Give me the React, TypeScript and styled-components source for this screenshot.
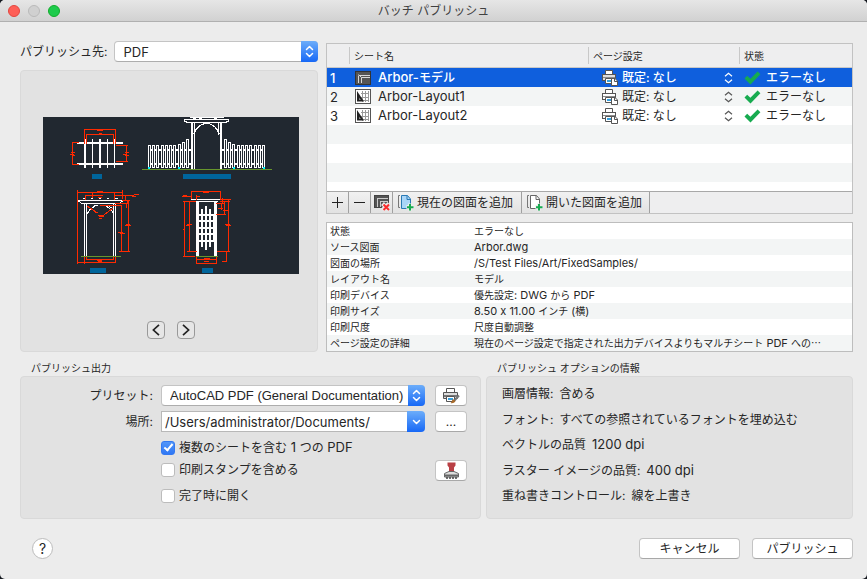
import React, { useState } from "react";
import styled, { createGlobalStyle, css } from "styled-components";

const GlobalStyle = createGlobalStyle`
  *, *::before, *::after { box-sizing: border-box; }
  body {
    margin: 0;
    background: #14181f;
    color: #262626;
    font: 12px/16px Inter, "Noto Sans CJK JP", sans-serif;
    font-feature-settings: "calt" 0;
  }
  button, input, select { font: inherit; color: inherit; margin: 0; }
`;

const Window = styled.main`
  display: flex;
  flex-direction: column;
  min-height: 100vh;
  overflow: hidden;
  border-radius: 5px;
  background: #ececec;
`;

const TitleBar = styled.header`
  display: grid;
  grid-template-columns: 1fr auto 1fr;
  align-items: center;
  height: 22px;
  padding: 0 8px;
  background: linear-gradient(#e6e6e6, #d1d1d1);
  border-bottom: 1px solid #b0b0b0;
`;

const Title = styled.h1`
  margin: 0;
  font-size: 12px;
  line-height: 16px;
  font-weight: 400;
  color: #404040;
`;

const Lights = styled.div`
  display: flex;
  gap: 8px;
`;

const Light = styled.button<{ $fill: string; $edge: string }>`
  width: 12px;
  height: 12px;
  padding: 0;
  border-radius: 50%;
  border: 1px solid ${(p) => p.$edge};
  background: ${(p) => p.$fill};
`;

const Content = styled.div`
  display: flex;
  flex: 1;
  flex-direction: column;
  padding: 19px 14px 20px 20px;
`;

const Upper = styled.div`
  display: grid;
  grid-template-columns: 298px minmax(0, 1fr);
  gap: 8px;
`;

const Column = styled.div<{ $top?: number }>`
  display: flex;
  flex-direction: column;
  gap: 8px;
  padding-top: ${(p) => p.$top ?? 0}px;
`;

const TargetRow = styled.div`
  display: flex;
  align-items: center;
  gap: 7px;
`;

const FieldLabel = styled.label`
  white-space: nowrap;
`;

const PopupWrap = styled.div`
  display: flex;
  position: relative;
  flex: 1;
  min-width: 0;
`;

const PopupSelect = styled.select<{ $narrow?: boolean }>`
  appearance: none;
  width: 100%;
  height: 21px;
  padding: 0 18px 0 8px;
  border: 1px solid #c4c4c4;
  border-bottom-color: #adadad;
  border-radius: 4px;
  background: #fff;
  font-family: ${(p) => (p.$narrow ? '"Liberation Sans"' : "Inter")}, "Noto Sans CJK JP", sans-serif;
  font-size: 13px;
`;

const BlueCap = styled.span`
  display: flex;
  position: absolute;
  top: 0;
  right: 0;
  align-items: center;
  justify-content: center;
  width: 17px;
  height: 21px;
  border-radius: 0 4px 4px 0;
  background: linear-gradient(#6cadfa, #1768f6);
  pointer-events: none;
`;

const panel = css`
  border: 1px solid #d9d9d9;
  border-radius: 4px;
  background: #e2e2e2;
`;

const PreviewPanel = styled.section`
  ${panel}
  display: flex;
  flex: 1;
  flex-direction: column;
  align-items: center;
  padding: 46px 18px 12px 22px;
`;

const Pager = styled.div`
  display: flex;
  gap: 12px;
  margin-top: auto;
`;

const PagerButton = styled.button`
  display: flex;
  align-items: center;
  justify-content: center;
  width: 18px;
  height: 18px;
  padding: 0;
  border: 1px solid #999;
  border-radius: 4px;
  background: #e6e6e6;
`;

const SheetBox = styled.div`
  display: flex;
  flex-direction: column;
  border: 1px solid #c2c2c2;
  background: #eeeeef;
`;

const SheetBody = styled.div`
  min-height: 147px;
  background: repeating-linear-gradient(#fff 0 19px, #f3f5f5 19px 38px) 0 24px;
`;

const SheetTable = styled.table`
  width: 100%;
  border-spacing: 0;
  table-layout: fixed;
`;

const HeadCell = styled.th<{ $width?: number }>`
  position: relative;
  width: ${(p) => (p.$width ? `${p.$width}px` : "auto")};
  height: 24px;
  padding: 0 5px;
  background: #eeeeef;
  font-size: 10px;
  font-weight: 400;
  text-align: left;
  border-bottom: 1px solid #c8c8c8;
  &:not(:first-child)::before {
    content: "";
    position: absolute;
    left: 0;
    top: 3px;
    bottom: 3px;
    width: 1px;
    background: #c8c8c8;
  }
`;

const SheetRow = styled.tr<{ $selected: boolean }>`
  height: 19px;
  font-weight: ${(p) => (p.$selected ? 500 : 400)};
  color: ${(p) => (p.$selected ? "#fff" : "#262626")};
  background: ${(p) => (p.$selected ? "#0f5fdd" : "transparent")};
`;

const Cell = styled.td`
  height: 19px;
  padding: 0 3px;
`;

const CellLine = styled.div<{ $gap: number; $indent?: number; $end?: number }>`
  display: flex;
  align-items: center;
  gap: ${(p) => p.$gap}px;
  height: 19px;
  padding-left: ${(p) => p.$indent ?? 0}px;
  padding-right: ${(p) => p.$end ?? 0}px;
  white-space: nowrap;
`;

const Mid = styled.span`
  font-size: 13px;
`;

const SetupSelect = styled.select`
  appearance: none;
  flex: 1;
  min-width: 0;
  height: 18px;
  padding: 0;
  border: 0;
  background: transparent;
`;

const SheetTools = styled.div`
  display: flex;
  height: 22px;
  border-top: 1px solid #a8a8a8;
`;

const ToolButton = styled.button<{ $width: number; $labelled?: boolean }>`
  display: flex;
  align-items: center;
  justify-content: ${(p) => (p.$labelled ? "flex-start" : "center")};
  gap: 3px;
  width: ${(p) => p.$width}px;
  padding: 0 0 0 ${(p) => (p.$labelled ? 4 : 0)}px;
  border: 0;
  border-right: 1px solid #a0a0a0;
  background: linear-gradient(#f1f1f1, #e2e2e2);
  white-space: nowrap;
`;

const DetailTable = styled.table`
  width: 100%;
  border: 1px solid #bdbdbd;
  border-spacing: 0;
  table-layout: fixed;
  font-size: 10px;
  line-height: 16px;
  background: #fff;
`;

const DetailRow = styled.tr`
  height: 16px;
  &:nth-child(even) { background: #f3f5f5; }
`;

const DetailName = styled.th`
  width: 144px;
  padding: 0 3px;
  font-weight: 400;
  text-align: left;
`;

const DetailValue = styled.td`
  padding: 0 3px;
  white-space: nowrap;
  overflow: hidden;
  font-family: "Noto Sans CJK JP", sans-serif;
`;

const Latin = styled.span<{ $size: number }>`
  font-family: Inter, sans-serif;
  font-size: ${(p) => p.$size}px;
  line-height: 1;
`;

const Lower = styled.div`
  display: grid;
  grid-template-columns: minmax(0, 461fr) minmax(0, 367fr);
  gap: 5px;
  margin-top: 9px;
`;

const Group = styled.section`
  display: flex;
  flex-direction: column;
`;

const GroupTitle = styled.h2`
  margin: 0;
  padding-left: 11px;
  font-size: 10px;
  line-height: 15px;
  font-weight: 400;
`;

const OutputPanel = styled.div`
  ${panel}
  display: grid;
  grid-template-columns: 132px 264px 34px;
  grid-template-rows: 25px 27px 26px 18px 34px;
  column-gap: 8px;
  align-items: center;
  min-height: 143px;
  padding: 6px 0 5px;
`;

const RightLabel = styled(FieldLabel)`
  text-align: right;
`;

const Combo = styled.div`
  display: flex;
  height: 21px;
`;

const ComboInput = styled.input`
  flex: 1;
  min-width: 0;
  height: 21px;
  padding: 0 3px;
  border: 1px solid #b8b8b8;
  border-right: 0;
  background: #fff;
  font-size: 13px;
`;

const ComboButton = styled.button`
  display: flex;
  align-items: center;
  justify-content: center;
  width: 18px;
  padding: 0;
  border: 0;
  border-radius: 0 4px 4px 0;
  background: linear-gradient(#6cadfa, #1768f6);
`;

const PushButton = styled.button<{ $width: number }>`
  display: flex;
  align-items: center;
  justify-content: center;
  justify-self: end;
  width: ${(p) => p.$width}px;
  height: 21px;
  padding: 0;
  border: 1px solid #c4c4c4;
  border-bottom-color: #a8a8a8;
  border-radius: 4px;
  background: #fff;
`;

const CheckLabel = styled.label`
  display: flex;
  grid-column: 2;
  align-items: center;
  gap: 4px;
  white-space: nowrap;
`;

const CheckBox = styled.input`
  appearance: none;
  width: 14px;
  height: 14px;
  border: 1px solid #bcbcbc;
  border-radius: 3px;
  background: #fff;
  &:checked {
    border-color: #3379f2;
    background: linear-gradient(#5296f8, #2f78f5);
  }
  &:checked::after {
    content: "";
    display: block;
    width: 5px;
    height: 9px;
    margin: 0 0 0 4px;
    border: solid #fff;
    border-width: 0 2px 2px 0;
    transform: rotate(40deg);
  }
`;

const InfoPanel = styled.ul`
  ${panel}
  display: flex;
  flex: 1;
  flex-direction: column;
  justify-content: space-between;
  margin: 0;
  padding: 9px 15px 14px;
  list-style: none;
`;

const InfoLine = styled.li`
  display: flex;
  gap: 6px;
  white-space: nowrap;
`;

const Footer = styled.footer`
  display: flex;
  align-items: center;
  gap: 12px;
  margin-top: auto;
  padding-left: 12px;
`;

const HelpButton = styled.button`
  width: 21px;
  height: 21px;
  margin-right: auto;
  padding: 0;
  border: 1px solid #bcbcbc;
  border-radius: 50%;
  background: #fff;
  font-size: 14px;
`;

/* Sets the Latin runs of a Japanese sentence one size up from the kana. */
const Mixed = ({ text, size }: { text: string; size: number }) => (
  <span>
    {text.split(/([ -~]+)/).map((part, i) =>
      i % 2 ? <Latin key={i} $size={size}>{part}</Latin> : part
    )}
  </span>
);

const UpDown = ({ color = "#fff" }: { color?: string }) => (
  <svg width="9" height="13" viewBox="0 0 9 13" fill="none" stroke={color} strokeWidth="1.5" strokeLinecap="round" strokeLinejoin="round">
    <path d="M1.5 4.5l3-3 3 3M1.5 8.5l3 3 3-3" />
  </svg>
);

const SmallUpDown = ({ color }: { color: string }) => (
  <svg width="9" height="12" viewBox="0 0 9 12" fill="none" stroke={color} strokeWidth="1.2">
    <path d="M1 4.2l3.5-3 3.5 3M1 7.8l3.5 3 3.5-3" />
  </svg>
);

const Down = () => (
  <svg width="9" height="6" viewBox="0 0 9 6" fill="none" stroke="#fff" strokeWidth="1.5" strokeLinecap="round" strokeLinejoin="round">
    <path d="M1.5 1.5l3 3 3-3" />
  </svg>
);

const Arrow = ({ flip }: { flip?: boolean }) => (
  <svg width="8" height="12" viewBox="0 0 8 12" fill="none" stroke="#222" strokeWidth="1.7">
    <path d={flip ? "M1 .8L6.6 6 1 11.2" : "M7 .8L1.4 6 7 11.2"} />
  </svg>
);

const ModelIcon = () => (
  <svg width="16" height="14" viewBox="0 0 16 14" fill="none">
    <rect x=".5" y=".5" width="15" height="13" fill="#555" stroke="#333" />
    <path d="M3.5 12V4.500M6.500 12V6.500H15M4.500 4.500H15" stroke="#d8d8d8" />
    <path d="M3.500 3.500l3 3" stroke="#d8d8d8" />
  </svg>
);

const LayoutIcon = () => (
  <svg width="16" height="15" viewBox="0 0 16 15" fill="none">
    <rect x=".5" y=".5" width="15" height="14" fill="#fff" stroke="#555" />
    <path d="M6 4.500h8M6 8.500h8M6 11.500h8M7.500 2v11M10.500 2v11M13.500 2v11" stroke="#999" />
    <path d="M2 2l7 10.500H2z" fill="#222" />
    <path d="M4 8.500l2 2.500H4z" fill="#888" />
  </svg>
);

const PagePrinterIcon = ({ selected }: { selected: boolean }) => (
  <svg width="16" height="16" viewBox="0 0 16 16">
    <path d="M3.500 5V.5H10.500V5" fill="#fff" stroke="#555" />
    <rect x=".5" y="4.500" width="13" height="6" fill={selected ? "#ddd" : "#fff"} stroke="#555" />
    <path d="M1 7h12v1H1z" fill="#8b8b8b" />
    <path d="M3.500 8.500h7v5h-7z" fill="#fff" stroke="#555" />
    <path d="M5 10h4v2H5z" fill="#35a0df" />
    <path d="M9.500 8.500h3.500l2.500 2.500v4.500h-6z" fill="#fff" stroke="#555" />
    <path d="M12.500 8.500v3h3" fill="none" stroke="#555" />
  </svg>
);

const CheckIcon = () => (
  <svg width="17" height="14" viewBox="0 0 17 14">
    <path d="M.5 7.500L3.200 4.800l3.200 3L13.600.6 16.400 3.200 6.500 13.500z" fill="#17ab50" />
  </svg>
);

const RemoveSheetIcon = () => (
  <svg width="16" height="16" viewBox="0 0 16 16" fill="none">
    <rect x=".5" y=".5" width="14" height="12" fill="#555" stroke="#444" />
    <path d="M3 3.500h11M6 6.500h8M3.500 3v9M6.500 6v6" stroke="#ccc" />
    <path d="M8.500 8.500l6.500 6.500M15 8.500L8.500 15" stroke="#eee" strokeWidth="4" />
    <path d="M9.500 9.500l5.500 5.500M15 9.500L9.500 15" stroke="#fb2c2c" strokeWidth="2" />
  </svg>
);

const AddSheetIcon = ({ fill }: { fill: string }) => (
  <svg width="17" height="17" viewBox="0 0 17 17" fill="none">
    <path d="M3 1.500H1.500v12H3" stroke="#777" />
    <path d="M4.500 1.500h6l3 3.500v9.500h-9z" fill={fill} stroke={fill === "#fff" ? "#666" : "#2879b5"} />
    <path d="M10 1.500v4h3.500" stroke={fill === "#fff" ? "#666" : "#2879b5"} />
    <path d="M13 9.500v7M9.500 13h7" stroke="#ededed" strokeWidth="4" />
    <path d="M13 10v6.500M10 13.300h6.500" stroke="#17ab50" strokeWidth="2" />
  </svg>
);

const Sign = ({ plus }: { plus?: boolean }) => (
  <svg width="13" height="13" viewBox="0 0 13 13" stroke="#222">
    <path d={plus ? "M1 6.500h11M6.500 1v11" : "M1 6.500h11"} />
  </svg>
);

const EditPrinterIcon = () => (
  <svg width="17" height="17" viewBox="0 0 17 17">
    <path d="M3.500 5V1.500h8V5" fill="#fff" stroke="#555" />
    <path d="M.5 5.500h14v6H.5z" fill="#ddd" stroke="#555" />
    <path d="M1 8h13v2H1z" fill="#777" />
    <path d="M3.500 9.500h8v5h-8z" fill="#fff" stroke="#555" />
    <path d="M5 11h5v2H5z" fill="#35a0df" />
    <path d="M16 8.500l-4.500 5" stroke="#777" strokeWidth="2" />
    <path d="M10 12l2.500 2c-1 2-3 2.500-5 2 1.500-1 1.200-2.500 2.500-4z" fill="#a86b2b" />
  </svg>
);

const StampIcon = () => (
  <svg width="17" height="17" viewBox="0 0 17 17">
    <path d="M4.500.5h8v3L11 5.500V10H6V5.500L4.500 3.500z" fill="#b94045" />
    <path d="M6 9.500h5l4.500 2v3.500H1.500v-3.500z" fill="#ddd" stroke="#666" />
    <path d="M1 12.500h15v2H1z" fill="#666" />
    <path d="M3 16h11" stroke="#444" strokeWidth="1.500" strokeDasharray="2 1" />
  </svg>
);

const pickets = [
  [105, 28], [109, 28], [113, 28], [118, 28], [122, 28], [126, 28], [130, 28], [135, 27], [139, 25], [143, 22],
];

const Fence = () => (
  <g>
    {pickets.map(([x, y]) => (
      <path key={x} d={`M${x + 0.5} 51V${y + 0.5}H${x + 2.5}V50.500H${x + 0.5}`} />
    ))}
    <path d="M108 33h2M112 33h1M116 33h2M121 33h1M125 33h1M129 33h1M133 33h2M138 33h1M142 33h1M146 33h2M108 47h2M112 47h1M116 47h2M121 47h1M125 47h1M129 47h1M133 47h2M138 47h1M142 47h1M146 47h2" strokeWidth="2" />
  </g>
);

const Drawing = () => (
  <svg width="256" height="157" viewBox="0 0 256 157" role="img" aria-label="Arbor" fill="none" shapeRendering="crispEdges">
    <rect width="256" height="157" fill="#212830" />
    <g stroke="#fff">
      <path d="M34 26h46M34 47h46M42 22v29M57 22v29" strokeWidth="2" />
      <path d="M49.500 22v29M64.500 22v29M71.500 22v29" />
      <Fence />
      <g transform="translate(327 0) scale(-1 1)"><Fence /></g>
      <path d="M149 5v47M178 5v47" strokeWidth="2" />
      <path d="M151.500 6v46M175.500 6v12M141 2.500h45M144 5.500h39M141.500 2v2l3 1.500M185.500 2v2l-3 1.500M150 1.500h3M156 1.500h3M171 1.500h3M147 .5h34" />
      <path d="M150.500 17.500c2-5 5-9 11-11h4c5 1 9 6 11 11M152 13.500c3-4 6-6 10-7M175 13.500c-3-4-5-6-9-7" />
      <path d="M35 83.500h45M38 86.500h38M35.500 84l3 2.500M79.500 84l-3 2.500M41.500 86v53M43.500 86v53M70.500 86v53M72.500 86v53" />
      <path d="M40 81.500h3M48 81.500h2M56 81.500h2M64 81.500h2M72 81.500h3" />
      <path d="M44.500 97c1-4 5-7 10-9M70.500 97c-1-4-5-7-10-9M47.500 92l5-4M69 91l-6-3" strokeDasharray="3 1" />
      <path d="M148 82.500h29M150 84.500h25" />
      <path d="M154.500 84v55M172.500 84v55" strokeWidth="3" />
      <path d="M159 92v38M163 89v44M167 92v38M154 98h18M154 104h18M154 111h18M154 117h18M154 124h18" strokeWidth="2" />
      <path d="M153.500 98v26M170.500 98v26" />
    </g>
    <g stroke="#ff2a00">
      <path d="M41.500 27V12.500h31V27M43.500 27V17.500h27V27M54 13.500h6M56 16.500h3M36 25.500h-7v22h7M73 28.500h12M73 44.500h12M83.500 28v17" />
      <path d="M27 37.500h4M28 35.500h4M29 38.500h3M80 37.500h4M82 35.500h4M82 38.500h4" />
      <path d="M34.500 73v74M79.500 73v9M34 75.500h46M54 74.500h6M42.500 83v-4.500h17M55 80.500h4M49.500 76v5M71.500 76v7M71 78.500h20M89 79.500h4M91 77.500h5M82.500 79v4" />
      <path d="M79 83.500h8M85.500 83v52M57 88.500h22M72 86.500h12v-4M83.500 86v5M78.500 88v47M76 134.500h11" />
      <path d="M82 108.500h6M83 107.500h4M75 115.500h5M77 116.500h5M44 89l6 4 3 2M55 99l6-1 9-7M52 95.500h3M56 99.500h5M56 101.500h3" />
      <path d="M43.500 140v2.500h27V140M34 145.500h38.500V140M41.500 140v7M54 143.500h5M55 144.500h4" />
      <path d="M148.500 82v-7.500h29V82M160 75.500h6M139 79.500h9M140 78.500h4M153.500 83v-5M153 79.500h4M177 82.500h11M179.500 81v5" />
      <path d="M140 84.500h13M141.500 84v56M140 139.500h12M146.500 85v50M144 134.500h10M144 107.500h5M143 108.500h4M140 112.500h2" />
      <path d="M177 84.500h10M185.500 82v53M174 134.500h13M173 97.500h10M181.500 85v13M173 86.500h9M178.500 87v6M175 91.500h5M180 93.500h5M182 107.500h5M183 108.500h5M183.500 135v9.500H179" />
      <path d="M153.500 140v6h20v-6M154 142.500h20M161 141.500h6M161 144.500h5" />
    </g>
    <path d="M99 52.500h130M38 139.500h40M153 139.500h22" stroke="#67962c" />
    <path d="M105 50h2v2h-2zM135 50h2v2h-2zM190 50h2v2h-2zM220 50h2v2h-2z" fill="#00f2ff" />
    <path d="M49 57h10v5H49zM140 57h48v5h-48zM47 151h16v5H47zM159 151h11v5h-11z" fill="#00659b" />
  </svg>
);

const sheets = [
  { name: "Arbor-モデル", model: true },
  { name: "Arbor-Layout1", model: false },
  { name: "Arbor-Layout2", model: false },
];

const details = [
  { name: "状態", value: "エラーなし" },
  { name: "ソース図面", value: "Arbor.dwg" },
  { name: "図面の場所", value: "/S/Test Files/Art/FixedSamples/" },
  { name: "レイアウト名", value: "モデル" },
  { name: "印刷デバイス", value: "優先設定: DWG から PDF" },
  { name: "印刷サイズ", value: "8.50 x 11.00 インチ (横)" },
  { name: "印刷尺度", value: "尺度自動調整" },
  { name: "ページ設定の詳細", value: "現在のページ設定で指定された出力デバイスよりもマルチシート PDF への…" },
];

const options = [
  ["画層情報:", "含める"],
  ["フォント:", "すべての参照されているフォントを埋め込む"],
  ["ベクトルの品質", "1200 dpi"],
  ["ラスター イメージの品質:", "400 dpi"],
  ["重ね書きコントロール:", "線を上書き"],
];

export default function App() {
  const [selected, setSelected] = useState(0);
  return (
    <>
      <GlobalStyle />
      <Window lang="ja">
        <TitleBar>
          <Lights>
            <Light aria-label="閉じる" $fill="#fe5f57" $edge="#e2463f" />
            <Light aria-label="しまう" $fill="#d0d0d0" $edge="#b9b9b9" />
            <Light aria-label="拡大" $fill="#1ecb4c" $edge="#12ac2b" />
          </Lights>
          <Title>バッチ パブリッシュ</Title>
        </TitleBar>
        <Content>
          <Upper>
            <Column>
              <TargetRow>
                <FieldLabel htmlFor="target">パブリッシュ先:</FieldLabel>
                <PopupWrap>
                  <PopupSelect id="target"><option>PDF</option></PopupSelect>
                  <BlueCap><UpDown /></BlueCap>
                </PopupWrap>
              </TargetRow>
              <PreviewPanel>
                <Drawing />
                <Pager>
                  <PagerButton aria-label="前へ"><Arrow /></PagerButton>
                  <PagerButton aria-label="次へ"><Arrow flip /></PagerButton>
                </Pager>
              </PreviewPanel>
            </Column>
            <Column $top={2}>
              <SheetBox>
                <SheetBody>
                  <SheetTable>
                    <thead>
                      <tr>
                        <HeadCell $width={22} aria-label="番号" />
                        <HeadCell>シート名</HeadCell>
                        <HeadCell $width={151}>ページ設定</HeadCell>
                        <HeadCell $width={113}>状態</HeadCell>
                      </tr>
                    </thead>
                    <tbody>
                      {sheets.map((s, i) => {
                        const on = i === selected;
                        return (
                          <SheetRow key={s.name} $selected={on} onClick={() => setSelected(i)}>
                            <Cell><CellLine $gap={0}><Mid>{i + 1}</Mid></CellLine></Cell>
                            <Cell>
                              <CellLine $gap={7} $indent={3}>
                                {s.model ? <ModelIcon /> : <LayoutIcon />}
                                <Mixed text={s.name} size={13} />
                              </CellLine>
                            </Cell>
                            <Cell>
                              <CellLine $gap={4} $indent={11} $end={3}>
                                <PagePrinterIcon selected={on} />
                                <SetupSelect aria-label={`${s.name} ページ設定`}><option>既定: なし</option></SetupSelect>
                                <SmallUpDown color={on ? "#fff" : "#555"} />
                              </CellLine>
                            </Cell>
                            <Cell>
                              <CellLine $gap={5} $indent={2}>
                                <CheckIcon />
                                <span>エラーなし</span>
                              </CellLine>
                            </Cell>
                          </SheetRow>
                        );
                      })}
                    </tbody>
                  </SheetTable>
                </SheetBody>
                <SheetTools>
                  <ToolButton $width={22} aria-label="追加"><Sign plus /></ToolButton>
                  <ToolButton $width={22} aria-label="削除"><Sign /></ToolButton>
                  <ToolButton $width={22} aria-label="モデルを除外"><RemoveSheetIcon /></ToolButton>
                  <ToolButton $width={129} $labelled><AddSheetIcon fill="#a9d5f7" />現在の図面を追加</ToolButton>
                  <ToolButton $width={128} $labelled><AddSheetIcon fill="#fff" />開いた図面を追加</ToolButton>
                </SheetTools>
              </SheetBox>
              <DetailTable>
                <tbody>
                  {details.map((d) => (
                    <DetailRow key={d.name}>
                      <DetailName scope="row">{d.name}</DetailName>
                      <DetailValue><Mixed text={d.value} size={11} /></DetailValue>
                    </DetailRow>
                  ))}
                </tbody>
              </DetailTable>
            </Column>
          </Upper>
          <Lower>
            <Group>
              <GroupTitle>パブリッシュ出力</GroupTitle>
              <OutputPanel>
                <RightLabel htmlFor="preset">プリセット:</RightLabel>
                <PopupWrap>
                  <PopupSelect id="preset" $narrow><option>AutoCAD PDF (General Documentation)</option></PopupSelect>
                  <BlueCap><UpDown /></BlueCap>
                </PopupWrap>
                <PushButton $width={32} aria-label="プリセットを編集"><EditPrinterIcon /></PushButton>
                <RightLabel htmlFor="place">場所:</RightLabel>
                <Combo>
                  <ComboInput id="place" defaultValue="/Users/administrator/Documents/" />
                  <ComboButton aria-label="場所の一覧"><Down /></ComboButton>
                </Combo>
                <PushButton $width={32}>...</PushButton>
                <CheckLabel>
                  <CheckBox type="checkbox" defaultChecked />
                  <Mixed text="複数のシートを含む 1 つの PDF" size={13} />
                </CheckLabel>
                <CheckLabel><CheckBox type="checkbox" />印刷スタンプを含める</CheckLabel>
                <PushButton $width={32} aria-label="印刷スタンプの設定"><StampIcon /></PushButton>
                <CheckLabel><CheckBox type="checkbox" />完了時に開く</CheckLabel>
              </OutputPanel>
            </Group>
            <Group>
              <GroupTitle>パブリッシュ オプションの情報</GroupTitle>
              <InfoPanel>
                {options.map(([name, value]) => (
                  <InfoLine key={name}>
                    <span>{name}</span>
                    <Mixed text={value} size={13} />
                  </InfoLine>
                ))}
              </InfoPanel>
            </Group>
          </Lower>
          <Footer>
            <HelpButton aria-label="ヘルプ">?</HelpButton>
            <PushButton $width={101}>キャンセル</PushButton>
            <PushButton $width={101}>パブリッシュ</PushButton>
          </Footer>
        </Content>
      </Window>
    </>
  );
}
